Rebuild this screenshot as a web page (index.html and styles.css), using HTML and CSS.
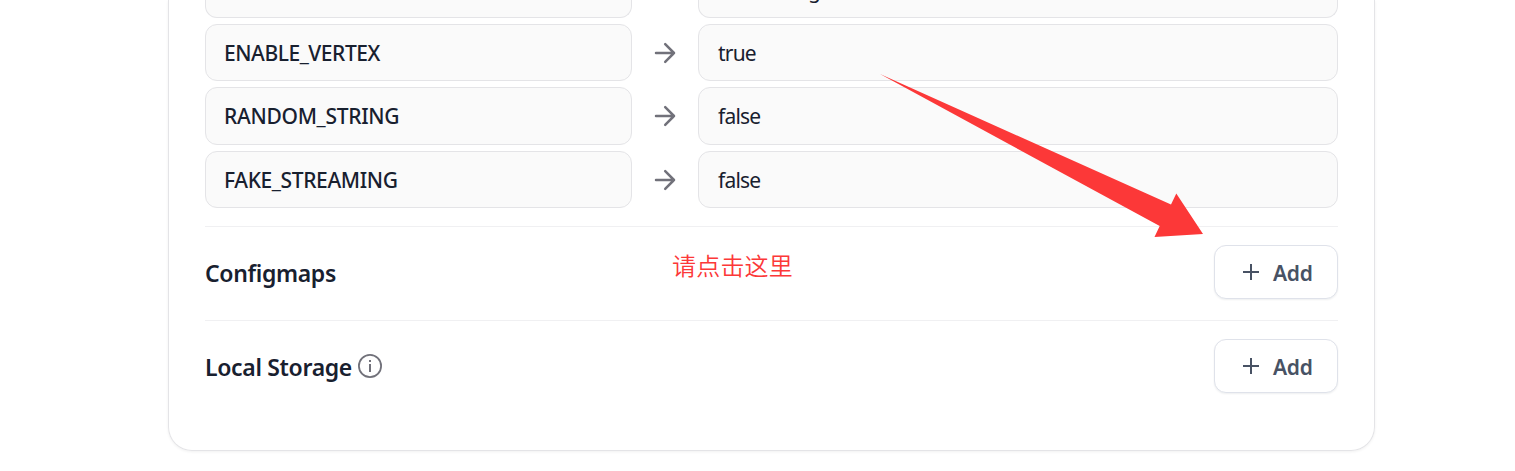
FILE: index.html
```html
<!DOCTYPE html>
<html lang="en">
<head>
<meta charset="utf-8">
<title>Environment</title>
<link rel="stylesheet" href="styles.css">
</head>
<body>
<svg class="defs" width="0" height="0">
  <symbol id="arrow" viewBox="0 0 24 24"><path d="M3 12H21M12.2 3.2L21 12L12.2 20.8" fill="none" stroke="currentColor" stroke-width="2.5" stroke-linecap="round" stroke-linejoin="round"/></symbol>
  <symbol id="plus" viewBox="0 0 18 18"><path d="M9 1V17M1 9H17" fill="none" stroke="currentColor" stroke-width="2"/></symbol>
</svg>
<main class="card">
  <section class="vars">
    <div class="row cut"><div class="field key"></div><span class="arrow"></span><div class="field value"><span class="tail">g</span></div></div>
    <div class="row"><div class="field key"><span class="k1">ENABLE_VERTEX</span></div><svg class="arrow"><use href="#arrow"/></svg><div class="field value"><span class="v1">true</span></div></div>
    <div class="row tall"><div class="field key"><span class="k2">RANDOM_STRING</span></div><svg class="arrow"><use href="#arrow"/></svg><div class="field value"><span class="v2">false</span></div></div>
    <div class="row"><div class="field key"><span class="k3">FAKE_STREAMING</span></div><svg class="arrow"><use href="#arrow"/></svg><div class="field value"><span class="v2">false</span></div></div>
  </section>
  <section class="block">
    <h2 class="title">Configmaps</h2>
    <button class="add"><svg class="plus"><use href="#plus"/></svg><span>Add</span></button>
  </section>
  <section class="block">
    <h2 class="title">Local Storage</h2>
    <svg class="info" viewBox="0 0 24 24"><circle cx="12" cy="12" r="11.1" fill="none" stroke="currentColor" stroke-width="1.8"/><path d="M12 10V18M12 6V8" fill="none" stroke="currentColor" stroke-width="2"/></svg>
    <button class="add"><svg class="plus"><use href="#plus"/></svg><span>Add</span></button>
  </section>
</main>
<svg class="pointer" viewBox="0 0 326 166"><path d="M0 0L291 130.5L296.3 119.5L323 160L274.5 163L279.7 152Z" fill="#fc3838"/></svg>
<p class="note">请点击这里</p>
</body>
</html>
```
FILE: styles.css
```css
* { box-sizing: border-box; }
body {
  margin: 0;
  height: 471px;
  overflow: hidden;
  background: #fff;
  color: #18202f;
  font-family: "Noto Sans", "Noto Sans CJK SC", sans-serif;
}
.defs { position: absolute; }
.card {
  width: 1207px;
  height: 451px;
  margin-left: 168px;
  padding: 0 36px;
  border: 1px solid #e4e4e7;
  border-top: 0;
  border-radius: 0 0 24px 24px;
  box-shadow: 0 1px 3px rgba(0, 0, 0, .06);
}
.vars { display: flex; flex-direction: column; gap: 6px; height: 226px; }
.row { display: flex; align-items: center; height: 57px; flex: none; }
.row.tall { height: 58px; }
.row.cut { height: 18px; overflow: hidden; }
.field {
  display: flex;
  align-items: center;
  height: 100%;
  padding: 0 18px;
  border: 1px solid #e4e4e7;
  border-radius: 12px;
  background: #fafafa;
  font-size: 21px;
  line-height: 28px;
  white-space: nowrap;
}
.cut .field { border-top: 0; border-radius: 0 0 12px 12px; }
.key { width: 427px; font-weight: 500; }
.value { width: 640px; }
.k1 { letter-spacing: -.45px; }
.k2 { letter-spacing: -.3px; }
.k3 { letter-spacing: -.38px; }
.v1 { letter-spacing: -.8px; padding-left: 1px; }
.v2 { letter-spacing: -.8px; padding-left: 1px; }
.arrow { width: 24px; height: 24px; margin: 0 21px; color: #71717a; }
.tail { margin: -38px 0 0 91px; }
.block { display: flex; align-items: center; height: 94px; padding-bottom: 4px; border-top: 1px solid #f0f0f2; }
.title { margin: 0; padding-top: 2px; font-size: 23px; line-height: 32px; font-weight: 600; letter-spacing: -.33px; white-space: nowrap; }
.info { width: 24px; height: 24px; margin-left: 6px; color: #71717a; }
.add {
  display: flex;
  align-items: center;
  width: 124px;
  height: 54px;
  margin-left: auto;
  padding: 0 0 0 27px;
  gap: 13px;
  border: 1px solid #dfe2ea;
  border-radius: 12px;
  background: #fff;
  box-shadow: 0 1px 2px rgba(16, 24, 40, .07);
  color: #485264;
  font: 600 21px/28px "Noto Sans", sans-serif;
  letter-spacing: -.3px;
}
.add span { padding-top: 2px; }
.plus { width: 18px; height: 18px; }
.pointer { position: absolute; left: 880px; top: 74px; width: 326px; height: 166px; }
.note {
  position: absolute;
  left: 672px;
  top: 247px;
  margin: 0;
  color: #fc3838;
  font: 350 24px/36px "Noto Sans CJK SC", sans-serif;
  letter-spacing: .2px;
}
```
